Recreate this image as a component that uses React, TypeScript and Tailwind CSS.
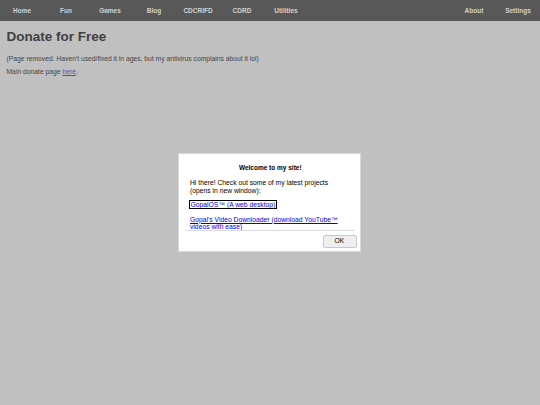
import React from "react";

export default function App() {
  const left = ["Home", "Fun", "Games", "Blog", "CDCRIFD", "CDRD", "Utilities"];
  const right = ["About", "Settings"];
  return (
    <div
      className="relative w-[540px] h-[405px] overflow-hidden bg-[#c0c0c0]"
      style={{ fontFamily: '"Liberation Sans", Arial, sans-serif' }}
    >
      <nav className="flex h-[21px] bg-[#585858] text-[6.5px] font-bold text-[#d2d2d2]">
        {left.map((l) => (
          <div key={l} className="w-[44px] flex items-center justify-center leading-[21px]">
            {l}
          </div>
        ))}
        <div className="ml-auto flex">
          {right.map((l) => (
            <div key={l} className="w-[44px] flex items-center justify-center leading-[21px]">
              {l}
            </div>
          ))}
        </div>
      </nav>
      <main className="px-[6.5px] text-[#444444]">
        <h1 className="mt-[7.5px] text-[13.5px] leading-[15.5px] font-bold text-[#404040]">
          Donate for Free
        </h1>
        <p className="mt-[10.5px] text-[6.75px] leading-[7.5px]">
          (Page removed. Haven't used/fixed it in ages, but my antivirus complains about it lol)
        </p>
        <p className="mt-[6.4px] text-[6.75px] leading-[7.5px]">
          Main donate page{" "}
          <a href="#" className="text-[#5050b8] underline">
            here
          </a>
          .
        </p>
      </main>

      <div className="absolute left-[178px] top-[153px] w-[183px] h-[99px] bg-white border border-[#d9d9d9] flex flex-col text-[6.75px] leading-[7.6px] text-black">
        <div className="mx-[5.5px] h-[77px] border-b border-[#dcdcdc] pl-[5.5px] pr-[4px] pt-[9.5px] overflow-hidden">
          <div className="text-center font-bold text-[6.5px]">Welcome to my site!</div>
          <p className="mt-[8.3px]">
            Hi there! Check out some of my latest projects
            <br />
            (opens in new window):
          </p>
          <p className="mt-[6px]">
            <a href="#" className="text-[#0000ee] underline outline outline-1 outline-black outline-offset-0 px-[0.5px]">
              GopalOS™ (A web desktop)
            </a>
          </p>
          <p className="mt-[7.5px] pr-[4px]">
            <a href="#" className="text-[#0000ee] underline">
              Gopal's Video Downloader (download YouTube™ videos with ease)
            </a>
          </p>
        </div>
        <div className="flex justify-end pr-[3.5px] pt-[3.5px]">
          <button className="w-[34px] h-[13px] bg-[#efefef] border border-[#c8c8c8] rounded-[2px] text-[6.75px] text-black leading-none">
            OK
          </button>
        </div>
      </div>
    </div>
  );
}
